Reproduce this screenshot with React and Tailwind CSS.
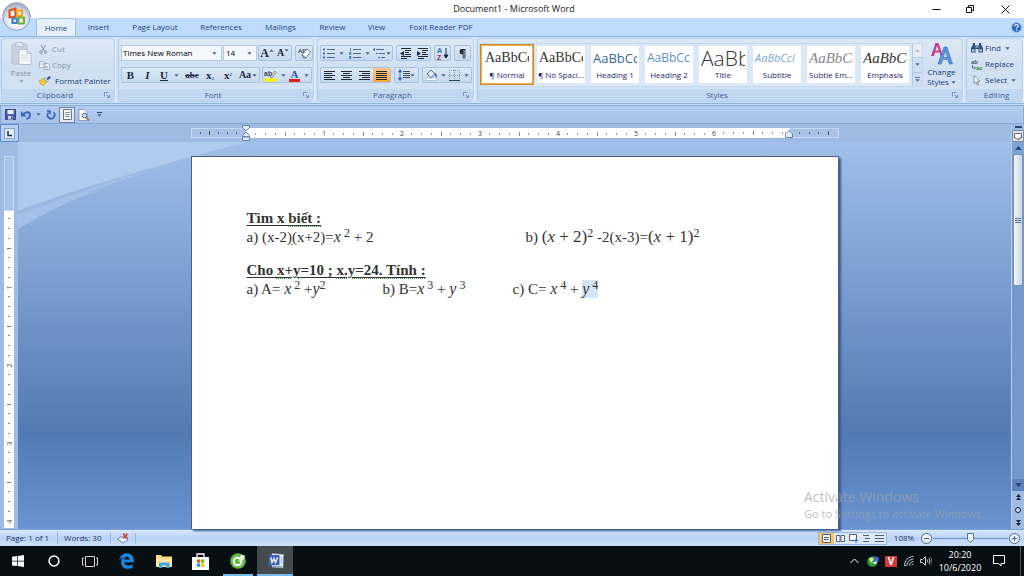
import React from "react";

const Caret = ({ className = "" }) => (
  <svg className={"h-[3px] w-[5px] shrink-0 " + className} viewBox="0 0 5 3" aria-hidden="true">
    <path d="M0.3 0.3h4.4L2.5 2.8z" fill="#4a6a9c" />
  </svg>
);

function Tool({ label, className = "", children }) {
  return (
    <button type="button" aria-label={label} className={"flex h-full shrink-0 items-center justify-center " + className}>
      {children}
    </button>
  );
}

const Box = ({ className = "", children }) => (
  <div className={"flex h-4 shrink-0 items-stretch rounded-xs border border-[#a9c3e4] bg-linear-to-b from-[#dce8f6] to-[#c6d9ef] " + className}>{children}</div>
);

function Group({ name, launcher = true, className = "", children }) {
  return (
    <section aria-label={name} className={"flex h-16 flex-col overflow-hidden rounded-sm border border-[#b3cdec] bg-linear-to-b from-[#dde8f5] via-[#cfdff1] to-[#d6e5f5] shadow-[1px_0_0_#eef5fd] " + className}>
      <div className="min-h-0 flex-1">{children}</div>
      <div className="flex h-3 shrink-0 items-center bg-[#c1d8f0] text-[#3e6199]">
        <span className="flex-1 pl-1 text-center">{name}</span>
        {launcher && (
          <button type="button" aria-label={name + " options"} className="pr-1">
            <svg className="size-[6px]" viewBox="0 0 7 7" fill="none" stroke="#6b8bb8">
              <path d="M0.5 5V0.5H5" />
              <path d="M3 3l3 3M6.5 3.5v3h-3" />
            </svg>
          </button>
        )}
      </div>
    </section>
  );
}

const linePaths = {
  left: "M0 .5h11M0 2.5h8M0 4.5h11M0 6.5h8M0 8.5h11",
  center: "M0 .5h11M2 2.5h7M0 4.5h11M2 6.5h7M0 8.5h11",
  right: "M0 .5h11M3 2.5h8M0 4.5h11M3 6.5h8M0 8.5h11",
  full: "M0 .5h11M0 2.5h11M0 4.5h11M0 6.5h11M0 8.5h11",
};
const Lines = ({ kind }) => (
  <svg className="h-[9px] w-[11px]" viewBox="0 0 11 9" stroke="#222a38">
    <path d={linePaths[kind]} />
  </svg>
);

const Bullets = ({ kind }) => (
  <svg className="h-[11px] w-3" viewBox="0 0 12 11">
    {kind === "multi" ? (
      <>
        <path d="M3 1.5h8M6 5.5h6M8 9.5h4" stroke="#556a8c" />
        <path d="M0 1.5h2M3 5.5h2M5 9.5h2M1.5 0v3" stroke="#3f6fc0" />
      </>
    ) : (
      <>
        <path d="M4 1.5h8M4 5.5h8M4 9.5h8" stroke="#556a8c" />
        {kind === "dot" ? (
          <path d="M0 .5h2v2H0zM0 4.5h2v2H0zM0 8.5h2v2H0z" fill="#3f6fc0" />
        ) : (
          <path d="M1.5 0v3M0 4.5h2v1H.5v1H2M0 8.5h2v2H0M.5 9.5H2" stroke="#3f6fc0" fill="none" strokeWidth=".8" />
        )}
      </>
    )}
  </svg>
);

const Indent = ({ flip }) => (
  <svg className="h-[11px] w-3" viewBox="0 0 12 11">
    <path d="M2 .5h10M6 2.5h6M6 4.5h4M6 6.5h6M2 8.5h10M2 10.5h6" stroke="#222a38" />
    <path d={flip ? "M1 3l4 2.5L1 8z" : "M5 3L1 5.5 5 8z"} fill="#222f4a" />
  </svg>
);

const Scissors = () => (
  <svg className="size-[9px]" viewBox="0 0 9 9" fill="none" stroke="#8b97a8">
    <path d="M2 0l3.5 6M6.5 0L3 6" />
    <circle cx="2" cy="7.2" r="1.3" />
    <circle cx="6.4" cy="7.2" r="1.3" />
  </svg>
);
const CopyIcon = () => (
  <svg className="h-[9px] w-[11px]" viewBox="0 0 11 9" fill="#eef3f9" stroke="#9aa8bb" strokeWidth=".8">
    <path d="M.5.5h4l1.5 1.5v4.500H.5zM5 2.500h4L10.500 4v4.500H5z" />
    <path d="M1.500 3h3M6 5.500h3M6 7h3" />
  </svg>
);
const Brush = () => (
  <svg className="h-[10px] w-3" viewBox="0 0 12 10">
    <path d="M0 5l5-2.500L8 6 5 9.500C3 9.500 1 8 0 5z" fill="#f0c848" stroke="#b78a25" strokeWidth=".5" />
    <path d="M5 2.500l1.500-1 2.500 3L8 6z" fill="#e8edf5" stroke="#55647c" strokeWidth=".5" />
    <path d="M7.500 2.500L10.500 0 12 1.500 9 4z" fill="#2c4f9c" />
  </svg>
);
const PasteIcon = () => (
  <svg className="h-[25px] w-[21px]" viewBox="0 0 21 25" stroke="#aeb9c8" strokeWidth=".8">
    <rect x="1" y="3" width="15" height="20" rx="1.500" fill="#c9d3e0" />
    <path d="M5 3V1.500h7V3l1 2.500H4z" fill="#dde4ed" />
    <path d="M8 8.500h8l4 4v11H8z" fill="#f3f7fc" />
    <path d="M16 8.500v4h4" fill="#dce5f0" />
    <path d="M10 14h7M10 16.500h7M10 19h7" stroke="#cdd8e6" />
  </svg>
);
const Eraser = () => (
  <svg className="h-3 w-[13px]" viewBox="0 0 13 12">
    <text x="0" y="6" fontSize="6" fontWeight="bold" fontFamily="Liberation Sans" fill="#3b4a63">AB</text>
    <path d="M4 8l5-6 3.500 2.500L8 11H5.500z" fill="#f4f6fa" stroke="#5a6a85" strokeWidth=".8" />
    <path d="M4 8l4 3" stroke="#5a6a85" />
  </svg>
);
const Highlighter = () => (
  <svg className="h-[13px] w-[13px]" viewBox="0 0 13 13">
    <rect y="9.500" width="13" height="3" fill="#fbf301" />
    <text x="0" y="7" fontSize="7" fontWeight="bold" fontFamily="Liberation Sans" fill="#35455f">ab</text>
    <path d="M6 8l5-6 1.500 1.500L8 8.500z" fill="#e8dca0" stroke="#55647c" strokeWidth=".6" />
  </svg>
);
const Sort = () => (
  <svg className="h-[13px] w-3" viewBox="0 0 12 13">
    <text x="0" y="6" fontSize="7" fontWeight="bold" fontFamily="Liberation Sans" fill="#3662b8">A</text>
    <text x="0" y="12.500" fontSize="7" fontWeight="bold" fontFamily="Liberation Sans" fill="#a83848">Z</text>
    <path d="M9 1v9M7 8l2 3 2-3z" stroke="#1f2a3c" fill="#1f2a3c" />
  </svg>
);
const Spacing = () => (
  <svg className="h-3 w-3" viewBox="0 0 12 12">
    <path d="M5 2.500h7M5 4.500h7M5 6.500h7M5 8.500h7" stroke="#3b4a63" />
    <path d="M2 1v10M.5 3L2 .5 3.500 3zM.5 9L2 11.500 3.500 9z" stroke="#2f62c0" fill="#2f62c0" strokeWidth=".8" />
  </svg>
);
const Bucket = () => (
  <svg className="h-3 w-[13px]" viewBox="0 0 13 12">
    <rect x="0" y="9" width="12" height="2.500" fill="#f2f6fb" stroke="#8ba0bf" strokeWidth=".5" />
    <path d="M2 5l4-4 4 4-4 3.500z" fill="#e9eff8" stroke="#4a5d80" strokeWidth=".9" />
    <path d="M10 4c2 .5 2 3 1.500 5-1-1-2-3-1.500-5z" fill="#2f62c0" />
  </svg>
);
const Borders = () => (
  <svg className="size-[11px]" viewBox="0 0 11 11" fill="none">
    <path d="M.5 0v9M5.500 0v9M10.500 0v9M0 .5h11M0 5.500h11" stroke="#8496b2" strokeDasharray="1 1" />
    <path d="M0 10.500h11" stroke="#34445f" />
  </svg>
);
const Binoculars = () => (
  <svg className="h-[10px] w-3" viewBox="0 0 12 10" fill="#33527f">
    <path d="M2 0h2v2.500h4V0h2l.5 2.500L12 5v4.500H7.500V6h-3v3.500H0V5l1.500-2.500z" />
    <path d="M1 6.500h2.500v2H1zM8.500 6.500H11v2H8.500zM4.500 3.500h3v1h-3z" fill="#c9daf0" />
  </svg>
);
const ReplaceIcon = () => (
  <svg className="h-[11px] w-3" viewBox="0 0 12 11">
    <text x="0" y="5" fontSize="6" fontWeight="bold" fontFamily="Liberation Sans" fill="#4a566c">ab</text>
    <text x="5" y="10.500" fontSize="6" fontWeight="bold" fontFamily="Liberation Sans" fill="#2f8a4a">ac</text>
    <path d="M1.500 6v3H4M3 7.500L4.500 9 3 10.500" stroke="#3f5f92" fill="none" strokeWidth=".8" />
  </svg>
);
const Pointer = () => (
  <svg className="h-[11px] w-3" viewBox="0 0 12 11">
    <path d="M3 .5v8l2-1.800 1.500 3.500 1.300-.6L6.300 6.200H9z" fill="#fff" stroke="#6a7a94" strokeWidth=".8" />
  </svg>
);

const styles = [
  { name: "¶ Normal", sample: "AaBbCc", look: "font-['Liberation_Serif',serif] text-sm text-[#333]", active: true },
  { name: "¶ No Spaci...", sample: "AaBbCc", look: "font-['Liberation_Serif',serif] text-sm text-[#333]" },
  { name: "Heading 1", sample: "AaBbCc", look: "font-['Open_Sans',sans-serif] text-[13px] font-medium text-[#35699f]" },
  { name: "Heading 2", sample: "AaBbCc", look: "font-['Open_Sans',sans-serif] text-xs text-[#5b93d0]" },
  { name: "Title", sample: "AaBb", look: "font-['Open_Sans',sans-serif] font-light text-[21px] text-[#333]" },
  { name: "Subtitle", sample: "AaBbCcI", look: "font-['Open_Sans',sans-serif] text-[11px] italic text-[#7ea9da]" },
  { name: "Subtle Em...", sample: "AaBbCc", look: "font-['Liberation_Serif',serif] text-[15px] italic text-[#888]" },
  { name: "Emphasis", sample: "AaBbCc", look: "font-['Liberation_Serif',serif] text-[15px] italic text-[#333]" },
];

function TitleBar() {
  return (
    <header className="grid h-[18px] grid-cols-[1fr_auto_1fr] items-center bg-white">
      <span />
      <h1 className="pl-1 text-[9px] text-[#222]">Document1 - Microsoft Word</h1>
      <div className="flex justify-end">
        <button type="button" aria-label="Minimize" className="flex w-[34px] justify-center">
          <svg className="size-[9px]" viewBox="0 0 9 9" stroke="#111"><path d="M.5 4.500h8" /></svg>
        </button>
        <button type="button" aria-label="Restore" className="flex w-[34px] justify-center">
          <svg className="size-[9px]" viewBox="0 0 9 9" stroke="#111" fill="none"><path d="M.5 2.500h5v5h-5zM2.500 2V.5h5v5H6" /></svg>
        </button>
        <button type="button" aria-label="Close" className="flex w-[37px] justify-center">
          <svg className="size-[9px]" viewBox="0 0 9 9" stroke="#111"><path d="M.5.5l8 8M8.500.5l-8 8" /></svg>
        </button>
      </div>
    </header>
  );
}

function OfficeButton() {
  return (
    <button type="button" aria-label="Office Button" className="absolute top-[2px] left-[2px] z-10">
      <svg className="size-[29px]" viewBox="0 0 29 29">
        <defs>
          <radialGradient id="orb" cx="50%" cy="65%" r="60%">
            <stop offset="0" stopColor="#fff" />
            <stop offset=".6" stopColor="#e4e9f1" />
            <stop offset="1" stopColor="#a5b1c6" />
          </radialGradient>
        </defs>
        <circle cx="14.500" cy="14.500" r="13.800" fill="url(#orb)" stroke="#8492ab" strokeWidth=".8" />
        <g fill="none" strokeWidth="2.200" strokeLinejoin="round">
          <path d="M7.500 8.500l6-2v8l-6 1z" stroke="#e2541b" />
          <path d="M15 8.500h5v5.500h-5z" stroke="#f3a51c" />
          <path d="M10.500 16.500h4.500v4.500h-4.500z" stroke="#3b7fd0" />
          <path d="M16.500 15.500h5.500v6h-5.500z" stroke="#6cb33f" />
        </g>
      </svg>
    </button>
  );
}

const tabs = [
  ["Insert", "w-[45px]"],
  ["Page Layout", "w-[68px]"],
  ["References", "w-[64px]"],
  ["Mailings", "w-[55px]"],
  ["Review", "w-[49px]"],
  ["View", "w-[39px]"],
  ["Foxit Reader PDF", "w-[90px]"],
];

function TabRow() {
  return (
    <nav aria-label="Ribbon tabs" className="flex h-[18px] items-stretch bg-[#bfdbff] pl-9 text-[#1f4585]">
      <button type="button" className="w-10 rounded-t-xs border border-b-0 border-[#9fc0ea] bg-[#e6f0fb]">Home</button>
      {tabs.map(([name, width]) => (
        <button type="button" key={name} className={width + " shrink-0 whitespace-nowrap"}>{name}</button>
      ))}
      <button type="button" aria-label="Help" className="mr-0.5 ml-auto self-center">
        <svg className="size-[11px]" viewBox="0 0 11 11">
          <circle cx="5.500" cy="5.500" r="5" fill="#2f6bc6" stroke="#a8c7ee" />
          <path d="M3.800 4.200c0-2.200 3.400-2.200 3.400 0 0 1.200-1.700 1.200-1.700 2.300M5.500 7.500v1.200" fill="none" stroke="#fff" strokeWidth="1.100" />
        </svg>
      </button>
    </nav>
  );
}

const glyph = "font-['Liberation_Serif',serif] leading-none text-[#1f2a40]";

function Ribbon() {
  return (
    <div className="flex gap-[3px] border-y border-[#8db2e3] bg-[#cfe1f6] p-px text-[#1b3c78]">
      <Group name="Clipboard" className="w-[114px] shrink-0">
        <div className="flex h-full gap-1 pt-0.5 pl-[7px] text-[#8c97a6]">
          <button type="button" className="flex w-6 flex-col items-center">
            <PasteIcon />
            <span className="pt-0.5 leading-[10px]">Paste</span>
            <Caret className="mt-0.5 opacity-50" />
          </button>
          <div className="flex flex-col">
            <button type="button" className="flex h-4 items-center gap-1 pl-0.5"><Scissors />Cut</button>
            <button type="button" className="flex h-4 items-center gap-0.5 pl-0.5"><CopyIcon />Copy</button>
            <button type="button" className="flex h-4 items-center gap-1 pl-0.5 whitespace-nowrap text-[#1b3c78]"><Brush />Format Painter</button>
          </div>
        </div>
      </Group>

      <Group name="Font" className="w-[196px] shrink-0">
        <div className="flex flex-col gap-1.5 pt-1.5 pl-0.5">
          <div className="flex gap-px">
            <div className="flex h-4 w-[101px] items-center border border-[#b4cbe8] bg-[#f4f8fd] pr-1 pl-px">
              <select aria-label="Font" className="min-w-0 flex-1 appearance-none text-black outline-none"><option>Times New Roman</option></select>
              <Caret />
            </div>
            <div className="flex h-4 w-[34px] items-center border border-[#b4cbe8] bg-[#f4f8fd] pr-1 pl-0.5">
              <select aria-label="Font size" className="min-w-0 flex-1 appearance-none text-black outline-none"><option>14</option></select>
              <Caret />
            </div>
            <Box className="w-[34px]">
              <Tool label="Grow Font" className="w-4"><span className={glyph + " text-xs font-bold"}>A</span><Caret className="mb-1.5 w-1 rotate-180" /></Tool>
              <Tool label="Shrink Font" className="w-4"><span className={glyph + " text-[10px] font-bold"}>A</span><Caret className="mb-1.5 w-1" /></Tool>
            </Box>
            <Box className="ml-0.5 w-[18px]"><Tool label="Clear Formatting" className="flex-1"><Eraser /></Tool></Box>
          </div>
          <div className="flex gap-0.5">
            <Box className="w-[139px]">
              <Tool label="Bold" className="w-[17px]"><b className={glyph + " text-[11px]"}>B</b></Tool>
              <Tool label="Italic" className="w-[17px]"><i className={glyph + " text-[11px] font-bold"}>I</i></Tool>
              <Tool label="Underline" className="w-[27px] gap-1.5"><span className={glyph + " text-[11px] font-bold underline"}>U</span><Caret /></Tool>
              <Tool label="Strikethrough" className="w-[18px]"><s className={glyph + " text-[9px] font-bold"}>abc</s></Tool>
              <Tool label="Subscript" className="w-[18px]"><span className={glyph + " text-[11px] font-bold"}>x<sub className="text-[5px] text-[#2f5db0]">2</sub></span></Tool>
              <Tool label="Superscript" className="w-[18px]"><span className={glyph + " text-[11px] font-bold"}>x<sup className="text-[5px] text-[#2f5db0]">2</sup></span></Tool>
              <Tool label="Change Case" className="flex-1 gap-px"><span className={glyph + " text-[10px] font-bold"}>Aa</span><Caret /></Tool>
            </Box>
            <Box className="w-[50px]">
              <Tool label="Highlight" className="flex-1 gap-1"><Highlighter /><Caret /></Tool>
              <Tool label="Font Color" className="flex-1 gap-1"><span className="h-[13px] border-b-3 border-[#e02020] px-0.5 font-['Liberation_Serif',serif] text-[11px] leading-[10px] font-bold text-[#2c5aa8]">A</span><Caret /></Tool>
            </Box>
          </div>
        </div>
      </Group>

      <Group name="Paragraph" className="w-[157px] shrink-0">
        <div className="flex flex-col gap-1.5 pt-1.5 pl-0.5">
          <div className="flex gap-[3px]">
            <Box className="w-[73px]">
              <Tool label="Bullets" className="w-[25px] gap-1"><Bullets kind="dot" /><Caret /></Tool>
              <Tool label="Numbering" className="w-[26px] gap-1"><Bullets kind="num" /><Caret /></Tool>
              <Tool label="Multilevel List" className="flex-1 gap-px"><Bullets kind="multi" /><Caret /></Tool>
            </Box>
            <Box className="w-[35px]">
              <Tool label="Decrease Indent" className="flex-1"><Indent /></Tool>
              <Tool label="Increase Indent" className="flex-1"><Indent flip /></Tool>
            </Box>
            <Box className="w-[17px]"><Tool label="Sort" className="flex-1"><Sort /></Tool></Box>
            <Box className="w-[17px]"><Tool label="Show marks" className="flex-1"><span className="text-[11px] font-bold text-[#222a38]">¶</span></Tool></Box>
          </div>
          <div className="flex gap-[3px]">
            <Box className="w-[71px]">
              <Tool label="Align Left" className="flex-1"><Lines kind="left" /></Tool>
              <Tool label="Center" className="flex-1"><Lines kind="center" /></Tool>
              <Tool label="Align Right" className="flex-1"><Lines kind="right" /></Tool>
              <Tool label="Justify" className="flex-1 bg-linear-to-b from-[#fbc98a] to-[#fba63c]"><Lines kind="full" /></Tool>
            </Box>
            <Box className="w-[25px]"><Tool label="Line Spacing" className="flex-1"><Spacing /><Caret /></Tool></Box>
            <Box className="w-[50px]">
              <Tool label="Shading" className="flex-1 gap-[3px]"><Bucket /><Caret /></Tool>
              <Tool label="Borders" className="flex-1 gap-1"><Borders /><Caret /></Tool>
            </Box>
          </div>
        </div>
      </Group>

      <Group name="Styles" className="min-w-0 flex-1">
        <div className="flex justify-between pt-1 pr-0.5 pl-px">
          <div className="flex items-stretch border border-[#c5d8ef] bg-[#dbe8f7]">
            {styles.map((s) => (
              <button
                type="button"
                key={s.name}
                className={
                  "flex h-[41px] w-[54px] shrink-0 flex-col items-center overflow-hidden border-2 bg-white bg-clip-padding " +
                  (s.active ? "border-[#eeb04f] outline -outline-offset-1 outline-[#c98a35]" : "border-x-3 border-[#dbe8f7]")
                }
              >
                <span className={"flex h-[23px] w-11 items-center overflow-hidden whitespace-nowrap " + s.look}>{s.sample}</span>
                <span className="whitespace-nowrap text-[#1e1e6e]">{s.name}</span>
              </button>
            ))}
            <div className="flex w-[10px] flex-col border-l border-[#b4cbe8]">
              <button type="button" aria-label="Previous styles" className="flex flex-1 items-center justify-center bg-[#e8ecf1]"><Caret className="rotate-180 opacity-40" /></button>
              <button type="button" aria-label="Next styles" className="flex flex-1 items-center justify-center border-y border-[#b4cbe8] bg-[#cfdff1]"><Caret /></button>
              <button type="button" aria-label="More styles" className="flex flex-1 flex-col items-center justify-center gap-px bg-[#cfdff1]"><span className="h-px w-[5px] bg-[#5a78a8]" /><Caret /></button>
            </div>
          </div>
          <button type="button" className="flex w-[38px] flex-col items-center leading-[10px]">
            <svg className="mb-0.5 h-[22px] w-[22px]" viewBox="0 0 22 22">
              <path fillRule="evenodd" d="M0 13L4.500 0h3l4.500 13H9.500l-1-3.500H4l-1 3.500zM4.500 7.500h3.200L6.100 2.500z" fill="#c0408f" />
              <path fillRule="evenodd" d="M7 21L13 4h3L21.500 21h-3.300l-1.300-4.500h-5.300l-1.300 4.500zM12.300 14.500h4L14.400 8z" fill="#5a94de" stroke="#3465b0" strokeWidth=".5" />
            </svg>
            <span>Change</span>
            <span className="flex items-center gap-0.5">Styles<Caret /></span>
          </button>
        </div>
      </Group>

      <Group name="Editing" launcher={false} className="w-[57px] shrink-0">
        <div className="flex h-full flex-col pt-px pl-1">
          <button type="button" className="flex h-4 items-center gap-0.5"><Binoculars />Find<Caret className="ml-0.5" /></button>
          <button type="button" className="flex h-4 items-center gap-0.5"><ReplaceIcon />Replace</button>
          <button type="button" className="flex h-4 items-center gap-0.5"><Pointer />Select<Caret className="ml-0.5" /></button>
        </div>
      </Group>
    </div>
  );
}

function QuickAccess() {
  return (
    <div role="toolbar" aria-label="Quick access" className="mt-px flex h-[19px] items-center border border-[#88abda] bg-linear-to-b from-[#b4cdef] to-[#a6c2e9] pl-1">
      <button type="button" aria-label="Save" className="w-[14px]">
        <svg className="size-[11px]" viewBox="0 0 11 11">
          <path d="M.5.5h10v10h-10z" fill="#4a5fb0" stroke="#37498f" />
          <path d="M2.500 1h6v4h-6z" fill="#eef3fb" /><path d="M3 7h5v3.500H3z" fill="#c9d4ea" /><path d="M6 7.500h1.500V10H6z" fill="#37498f" />
        </svg>
      </button>
      <button type="button" aria-label="Undo" className="flex w-6 items-center gap-1 pl-0.5">
        <svg className="h-[10px] w-[11px]" viewBox="0 0 11 10"><path d="M2 4.500C4.500 1.500 9 1.500 9 5c0 2-1.500 3.500-3.500 4" fill="none" stroke="#3d67c2" strokeWidth="2" /><path d="M0 1v5.500h5.500z" fill="#3d67c2" /></svg>
        <Caret />
      </button>
      <button type="button" aria-label="Repeat" className="flex w-4 justify-center">
        <svg className="size-[10px]" viewBox="0 0 10 10"><path d="M2.200 3a3.500 3.500 0 1 0 5.300-.4" fill="none" stroke="#3d67c2" strokeWidth="1.900" /><path d="M.2.3h4.600v4.600z" fill="#3d67c2" /></svg>
      </button>
      <button type="button" aria-label="Print layout" className="flex size-4 items-center justify-center border border-[#6f86a8] bg-[#e2ecf8]">
        <svg className="h-[11px] w-[9px]" viewBox="0 0 9 11" fill="#fff" stroke="#61738f"><path d="M.5.5h8v10h-8z" /><path d="M2 3.500h5M2 5.500h5M2 7.500h5" strokeWidth=".8" /></svg>
      </button>
      <button type="button" aria-label="Print preview" className="flex w-[17px] justify-center">
        <svg className="h-3 w-3" viewBox="0 0 12 12"><path d="M1 .5h5.500L9 3v8.500H1z" fill="#fff" stroke="#7d8ca5" strokeWidth=".8" /><circle cx="6.500" cy="6.500" r="2.300" fill="#cfe0f3" stroke="#4b5b77" /><path d="M8 8.500l3 3" stroke="#a07840" strokeWidth="1.700" /></svg>
      </button>
      <button type="button" aria-label="Customize" className="flex w-3 flex-col items-center gap-px pl-0.5"><span className="h-px w-[5px] bg-[#2b4570]" /><Caret /></button>
    </div>
  );
}

const eighths = [1, 2, 3, 4, 5, 6, 7, 8];

const InchAcross = ({ n }) => (
  <span className="grid w-[78px] shrink-0 grid-cols-8 items-center justify-items-center">
    {eighths.map((k) => (k === 8 ? <span key={k}>{n}</span> : <span key={k} className={k === 4 ? "h-1 w-px bg-[#888]" : "h-0.5 w-px bg-[#999]"} />))}
  </span>
);
const InchDown = ({ n }) => (
  <span className="grid h-[78px] shrink-0 grid-rows-8 items-center justify-items-center">
    {eighths.map((k) => (k === 8 ? <span key={k} className="-rotate-90 leading-[9px]">{n}</span> : <span key={k} className={k === 4 ? "h-px w-1 bg-[#777]" : "h-px w-0.5 bg-[#888]"} />))}
  </span>
);

function RulerRow() {
  return (
    <div className="flex h-[18px] bg-[#9dbbe3] text-[7px] text-[#444]">
      <button type="button" aria-label="Tab selector" className="flex w-[19px] items-center justify-center border border-[#5f8bd0] bg-[#b9d0f0]">
        <svg className="size-[11px]" viewBox="0 0 11 11"><path d="M.5.5h10v10h-10z" fill="#e4eefb" stroke="#7f9dcb" /><path d="M4 3v4.500h4" fill="none" stroke="#1f2f4f" strokeWidth="1.500" /></svg>
      </button>
      <div className="flex flex-1 items-center justify-center">
        <div className="relative flex h-[10px] w-[648px]">
          <div className="flex w-[55px] items-center justify-evenly border border-[#c6d9f2] bg-[#a9c3e8]">
            {[1, 2, 3, 4, 5].map((k) => <span key={k} className={k === 2 ? "h-1 w-px bg-[#555]" : "h-0.5 w-px bg-[#667]"} />)}
          </div>
          <div className="flex w-[543px] items-stretch overflow-hidden bg-white pl-[5px]">
            {[1, 2, 3, 4, 5, 6, 7].map((n) => <InchAcross key={n} n={n === 7 ? "" : n} />)}
          </div>
          <div className="flex flex-1 items-center justify-evenly border border-[#c6d9f2] bg-[#a9c3e8]">
            {[1, 2, 3, 4].map((k) => <span key={k} className={k === 4 ? "h-1 w-px bg-[#555]" : "h-0.5 w-px bg-[#667]"} />)}
          </div>
          <svg className="absolute -top-[3px] left-[51px] h-4 w-2" viewBox="0 0 8 16" fill="#e3edf9" stroke="#6a83ab"><path d="M.5.5h7v2L4 6 .5 2.500zM4 7l3.500 3.500v1h-7v-1zM.5 12h7v3.500h-7z" /></svg>
          <svg className="absolute top-[2px] left-[594px] h-[8px] w-2" viewBox="0 0 8 8" fill="#e3edf9" stroke="#6a83ab"><path d="M4 .5L7.500 4v3.500h-7V4z" /></svg>
        </div>
      </div>
      <button type="button" aria-label="View ruler" className="flex w-[13px] flex-col items-center justify-end border-l border-[#b7cfee]">
        <span className="h-0.5 w-[7px] bg-[#2b4570]" />
        <svg className="mt-0.5 size-3" viewBox="0 0 12 12"><path d="M.5.5h11v11H.5z" fill="#dfe3ea" stroke="#7b8798" /><path d="M2.500 8V3.500h7V8H7v2L4 8z" fill="#fff" stroke="#4e5a6e" strokeWidth=".9" /></svg>
      </button>
    </div>
  );
}

const M = ({ children }) => <i className="text-base leading-none">{children}</i>;
const Sup = ({ children }) => <sup className="top-0 align-[5px] text-xs leading-none">{children}</sup>;
const Power = ({ children }) => <span className="text-[17px] leading-none">{children}</span>;
const heading = "font-bold underline decoration-1 underline-offset-2";
const dotted = "underline decoration-[#3b9a3b] decoration-dotted decoration-1 underline-offset-3";
const wavy = "underline decoration-[#3b9a3b] decoration-wavy decoration-1 underline-offset-1";

function Workspace() {
  return (
    <div className="relative flex flex-1 bg-[#9dbbe3]">
      <div className="w-[18px] shrink-0 px-1 pt-[14px] text-[7px] text-[#444]">
        <div className="h-[55px] border border-[#c6d9f2] bg-[#a9c3e8]" />
        <div className="flex flex-col bg-white pt-[3px] pb-0.5">
          {[1, 2, 3, 4].map((n) => <InchDown key={n} n={n} />)}
        </div>
      </div>
      <main className="relative flex min-w-0 flex-1 justify-center bg-linear-to-b from-[#a0bfea] via-[#517bb2] via-75% to-[#6993d2] pt-[14px]">
        <svg className="absolute top-0 left-0 h-[88px] w-[230px]" viewBox="0 0 230 88" aria-hidden="true">
          <path d="M0 0H230C150 20 60 50 0 87z" fill="#a3c1e8" />
          <path d="M0 0H230C160 18 60 46 0 69z" fill="#aecaec" />
          <path d="M230 0C160 18 60 46 0 69V73C60 50 120 30 185 13z" fill="#9ab8e0" />
        </svg>
        <article className="relative w-[648px] border border-b-0 border-[#46608c] bg-white px-[55px] pt-[52px] font-['Liberation_Serif',serif] text-[15px] leading-[18px] text-[#333] shadow-[2px_2px_2px_#3d5c8c]">
          <h2 className={heading}>Tìm x <span className={dotted}>biết :</span></h2>
          <p className="flex h-[18px] whitespace-pre">
            <span className="w-[279px]">a) (x-2<span className={wavy}>)(</span>x+2)=<M>x</M><Sup> 2</Sup> + 2</span>
            <span>b) <Power>(<i>x</i> + 2)</Power><Sup>2</Sup> -2(x-3)=<Power>(<i>x</i> + 1)</Power><Sup>2</Sup></span>
          </p>
          <h2 className={heading + " mt-4"}>Cho <span className={dotted}>x+y</span>=10 ; <span className={dotted}>x.y=24. Tính :</span></h2>
          <p className="flex h-[18px] whitespace-pre">
            <span className="w-[136px]">a) A= <M>x</M><Sup> 2</Sup> +<M>y</M><Sup>2</Sup></span>
            <span className="w-[130px]">b) B=<M>x</M><Sup> 3</Sup> + <M>y</M><Sup> 3</Sup></span>
            <span>c) C= <M>x</M><Sup> 4</Sup> + <span className="bg-[#d5e4f3] py-px"><M>y</M><Sup> 4</Sup></span></span>
          </p>
        </article>
      </main>
      <aside aria-label="Scroll bar" className="flex w-[13px] shrink-0 flex-col items-center border-l border-[#b7cfee] bg-[#7398c9] text-[#1f2f4f]">
        <button type="button" aria-label="Scroll up" className="flex h-3 w-full items-center justify-center bg-[#7fa3d4]">
          <svg className="h-1 w-[7px]" viewBox="0 0 7 4"><path d="M3.500 0L7 4H0z" fill="#2d4878" /></svg>
        </button>
        <div className="flex h-[132px] w-[10px] flex-col items-center justify-center gap-px rounded-xs border border-[#8093ae] bg-linear-to-r from-[#f2f6fb] to-[#c6d7e6]">
          <span className="h-px w-1.5 bg-[#60738f]" /><span className="h-px w-1.5 bg-[#60738f]" /><span className="h-px w-1.5 bg-[#60738f]" />
        </div>
        <button type="button" aria-label="Scroll down" className="mt-auto flex h-3 w-full items-center justify-center bg-[#5d83bb]">
          <svg className="h-1 w-[7px]" viewBox="0 0 7 4"><path d="M0 0h7L3.500 4z" fill="#2d4878" /></svg>
        </button>
        <button type="button" aria-label="Previous page" className="flex h-3 w-full items-center justify-center bg-[#9dbbe3]"><svg className="h-1.5 w-[5px]" viewBox="0 0 5 6"><path d="M2.500 0L5 3H0zM2.500 3L5 6H0z" fill="#16233c" /></svg></button>
        <button type="button" aria-label="Browse object" className="flex h-[13px] w-full items-center justify-center bg-[#9dbbe3]"><span className="size-1.5 rounded-full border border-[#16233c] bg-[#c8d8ee]" /></button>
        <button type="button" aria-label="Next page" className="flex h-[13px] w-full items-center justify-center bg-[#9dbbe3]"><svg className="h-1.5 w-[5px]" viewBox="0 0 5 6"><path d="M0 0h5L2.500 3zM0 3h5L2.500 6z" fill="#16233c" /></svg></button>
      </aside>
      <div className="pointer-events-none absolute right-[42px] bottom-2 w-[178px] whitespace-nowrap text-[#9aa0a8]/70">
        <p className="text-sm leading-[18px]">Activate Windows</p>
        <p className="text-[11px] leading-[15px]">Go to Settings to activate Windows.</p>
      </div>
    </div>
  );
}

function StatusBar() {
  return (
    <footer className="flex h-[17px] items-center border-t border-[#7fa0cf] bg-linear-to-b from-[#d9e8fb] via-[#b9d2f5] to-[#cfe1f9] text-[8px] text-[#1f3864]">
      <span className="w-[57px] pl-1.5 whitespace-nowrap">Page: 1 of 1</span>
      <span className="w-[53px] border-l border-[#9ab8e0] pl-1.5 whitespace-nowrap">Words: 30</span>
      <button type="button" aria-label="Proofing errors" className="flex w-[26px] justify-center border-x border-[#9ab8e0]">
        <svg className="h-[11px] w-3" viewBox="0 0 12 11"><path d="M.5 6L5 3.500l6 3L6 10z" fill="#f5f8fd" stroke="#5471a5" strokeWidth=".8" /><path d="M6 .5l4.500 5M10.500.5L6 5.500" stroke="#e03a2a" strokeWidth="1.500" /></svg>
      </button>
      <div className="ml-auto flex h-[13px] border border-[#9ab8e0] bg-[#dce9fa]">
        {["Print Layout", "Full Screen Reading", "Web Layout", "Outline", "Draft"].map((v, i) => (
          <button type="button" key={v} aria-label={v} className={"flex items-center justify-center " + (i === 0 ? "w-[15px] bg-[#fbc36b]" : "w-[13px]")}>
            <svg className="size-[9px]" viewBox="0 0 9 9" fill="none" stroke="#51617d">
              {i === 0 && <><path d="M.5.5h8v8h-8z" fill="#fff" /><path d="M2 3.500h5M2 5.500h5" /></>}
              {i === 1 && <path d="M.5 1.500h3.500v6H.5zM5 1.500h3.500v6H5z" fill="#fff" />}
              {i === 2 && <><path d="M.5.5h7v6h-7z" fill="#fff" /><path d="M5 6.500h4M7 4v5" stroke="#2f6bc6" /></>}
              {i === 3 && <path d="M1 1.500h6M3 4.500h5M1 7.500h6" />}
              {i === 4 && <path d="M0 1.500h9M0 4.500h9M0 7.500h9" />}
            </svg>
          </button>
        ))}
      </div>
      <span className="w-[34px] text-center">108%</span>
      <button type="button" aria-label="Zoom out"><svg className="size-[11px]" viewBox="0 0 11 11" stroke="#4a638c"><circle cx="5.500" cy="5.500" r="5" fill="#eff5fd" /><path d="M3 5.500h5" strokeWidth="1.200" /></svg></button>
      <div className="relative mx-px flex h-3 w-[75px] items-center">
        <span className="h-px w-full bg-[#6f8fc0]" />
        <input type="range" aria-label="Zoom" min="10" max="200" defaultValue="108" className="absolute inset-0 w-full opacity-0" />
        <svg className="pointer-events-none absolute left-[34px] h-[10px] w-[7px]" viewBox="0 0 7 10"><path d="M.5.5h6v6l-3 3-3-3z" fill="#eef4fc" stroke="#56709b" /></svg>
      </div>
      <button type="button" aria-label="Zoom in" className="mr-1"><svg className="size-[11px]" viewBox="0 0 11 11" stroke="#4a638c"><circle cx="5.500" cy="5.500" r="5" fill="#eff5fd" /><path d="M3 5.500h5M5.500 3v5" strokeWidth="1.200" /></svg></button>
    </footer>
  );
}

const plain = "w-9 border-transparent";
const wide = "w-[37px] border-transparent";
const taskIcons = [
  ["Start", plain, <svg className="size-3" viewBox="0 0 12 12" fill="#fff"><path d="M0 1.700L5.300 1v4.700H0zM6 .9L12 0v5.700H6zM0 6.400h5.300v4.700L0 10.400zM6 6.400h6V12l-6-.9z" /></svg>],
  ["Search", plain, <svg className="size-3" viewBox="0 0 12 12" fill="none" stroke="#fff" strokeWidth="1.500"><circle cx="6" cy="6" r="4.900" /></svg>],
  ["Task View", plain, <svg className="h-[11px] w-4" viewBox="0 0 16 11" fill="none" stroke="#d5dadd"><path d="M3.500.5h9v10h-9zM2 2H.5v7H2M14 2h1.500v7H14" /></svg>],
  ["Edge", wide, <svg className="h-4 w-[15px]" viewBox="0 0 15 16"><path d="M.3 7.500C.9 3 4 .3 8 .3c4.500 0 6.800 3.400 6.800 7.200v1.700H5.200c.2 3.200 4.600 4.300 8.300 2.300v3.200c-5 2.400-11.500.6-11.500-5.300 0-2.700 1.500-4.600 3.500-5.400C3.500 4.300 1.500 5.400.3 7.500zM5.300 6.400h5.200c0-3.700-4.800-3.300-5.200 0z" fill="#1b86dd" /></svg>],
  ["File Explorer", wide, <svg className="h-[14px] w-4" viewBox="0 0 16 14"><path d="M0 1h5l1.500 1.500H16V13H0z" fill="#f7d774" /><path d="M0 4.500h16V13H0z" fill="#fce6a0" /><path d="M3 8.500h10.500V14h-3v-2.500H6V14H3z" fill="#3fa9e0" /></svg>],
  ["Store", wide, <svg className="h-[17px] w-[17px]" viewBox="0 0 17 17"><path d="M5 4V1h7v3" fill="none" stroke="#fff" strokeWidth="1.300" /><path d="M0 4h17v13H0z" fill="#fff" /><path d="M5 6.500h3.200v3.200H5z" fill="#f04e23" /><path d="M9 6.500h3.200v3.200H9z" fill="#7fb800" /><path d="M5 10.500h3.200v3.200H5z" fill="#00a1f0" /><path d="M9 10.500h3.200v3.200H9z" fill="#ffb800" /></svg>],
  ["Browser", "ml-1 w-[30px] border-t-transparent border-b-[#76b9ed]", <svg className="size-4" viewBox="0 0 16 16"><circle cx="8" cy="8" r="7.800" fill="#62b846" /><circle cx="7.500" cy="8.500" r="3.800" fill="none" stroke="#fff" strokeWidth="2" /><path d="M9 7l2-5.500 1.500 1L15 2l-1 4-4 3z" fill="#e8f5df" /></svg>],
  ["Word", "ml-1 w-9 border-t-[#434b4f] border-b-[#76b9ed] bg-[#434b4f]", <svg className="h-4 w-[17px]" viewBox="0 0 17 16"><path d="M5 .5L16.500 1.500 16 15 5 14z" fill="#eef3fb" stroke="#8ba0d0" strokeWidth=".6" /><path d="M2.500 2h10v10l-11.500.5z" fill="#3f62b8" /><path d="M3.800 4.500l1.200 5L7 5.500 8.500 9.500l2-5" fill="none" stroke="#fff" strokeWidth="1.300" /><path d="M13.500 5h2M13.500 7h2M13.500 9h2M6 13.500h9" stroke="#6f87c6" strokeWidth=".8" /></svg>],
];

function TaskBar() {
  return (
    <div role="toolbar" aria-label="Taskbar" className="flex h-[30px] shrink-0 items-stretch bg-[#080f12] text-[9px] text-white">
      {taskIcons.map(([name, look, icon]) => (
        <button type="button" key={name} aria-label={name} className={"flex shrink-0 items-center justify-center border-y-2 " + look}>
          {icon}
        </button>
      ))}
      <div className="ml-auto flex items-center">
        <button type="button" aria-label="Hidden icons" className="flex w-[19px] justify-center"><svg className="h-[6px] w-[9px]" viewBox="0 0 9 6" fill="none" stroke="#fff"><path d="M.5 5l4-4 4 4" /></svg></button>
        <button type="button" aria-label="Download Manager" className="flex w-[18px] justify-center"><svg className="h-[11px] w-3" viewBox="0 0 12 11"><circle cx="5.500" cy="5.500" r="5.200" fill="#2f9a3a" /><path d="M6 1c3-1.500 6 0 6 2.500S8 7 6.500 6z" fill="#3a6ad0" /><path d="M2 3c2-2 4-1 5 0L4 7z" fill="#e9f06a" /><path d="M5 7l5-2-1 3z" fill="#fff" /></svg></button>
        <button type="button" aria-label="Vietnamese input" className="flex w-[18px] justify-center"><span className="flex h-[11px] w-3 items-center justify-center bg-[#d8353d] text-[10px] leading-none font-bold">V</span></button>
        <button type="button" aria-label="Network" className="flex w-[18px] justify-center"><svg className="size-[10px]" viewBox="0 0 10 10" fill="none" stroke="#d5dadd" strokeWidth=".9"><path d="M.5 9.500C.5 4.500 4.500.5 9.500.5M3 9.500C3 6 6 3 9.500 3M5.500 9.500c0-2.300 1.700-4 4-4M8 9.500C8 8.500 8.500 8 9.500 8M.5 9.500h2" /></svg></button>
        <button type="button" aria-label="Volume" className="flex w-[15px] justify-center"><svg className="h-[10px] w-3" viewBox="0 0 12 10" fill="none" stroke="#e5e8ea" strokeWidth=".9"><path d="M.5 3.500h2L5.500.8v8.400L2.500 6.500h-2zM7 3.500c.8 1 .8 2 0 3M8.700 2c1.500 2 1.500 4 0 6" /><path d="M10.300.8c1.800 2.700 1.800 5.700 0 8.400" stroke="#6c7275" /></svg></button>
        <div className="w-[54px] text-center leading-[13px]"><p>20:20</p><p>10/6/2020</p></div>
        <button type="button" aria-label="Notifications" className="flex w-6 justify-center"><svg className="size-3" viewBox="0 0 12 12" fill="none" stroke="#fff"><path d="M.5.5h11v8H8v2.500L5.500 8.500h-5z" /></svg></button>
        <span className="ml-[9px] h-[30px] w-1 border-l border-[#4a5154]" />
      </div>
    </div>
  );
}

export default function App() {
  return (
    <div className="relative flex min-h-screen flex-col bg-[#bfdbff] font-['Open_Sans','Noto_Sans',sans-serif] text-[8px] leading-[12px]">
      <TitleBar />
      <OfficeButton />
      <TabRow />
      <Ribbon />
      <QuickAccess />
      <RulerRow />
      <Workspace />
      <StatusBar />
      <TaskBar />
    </div>
  );
}
